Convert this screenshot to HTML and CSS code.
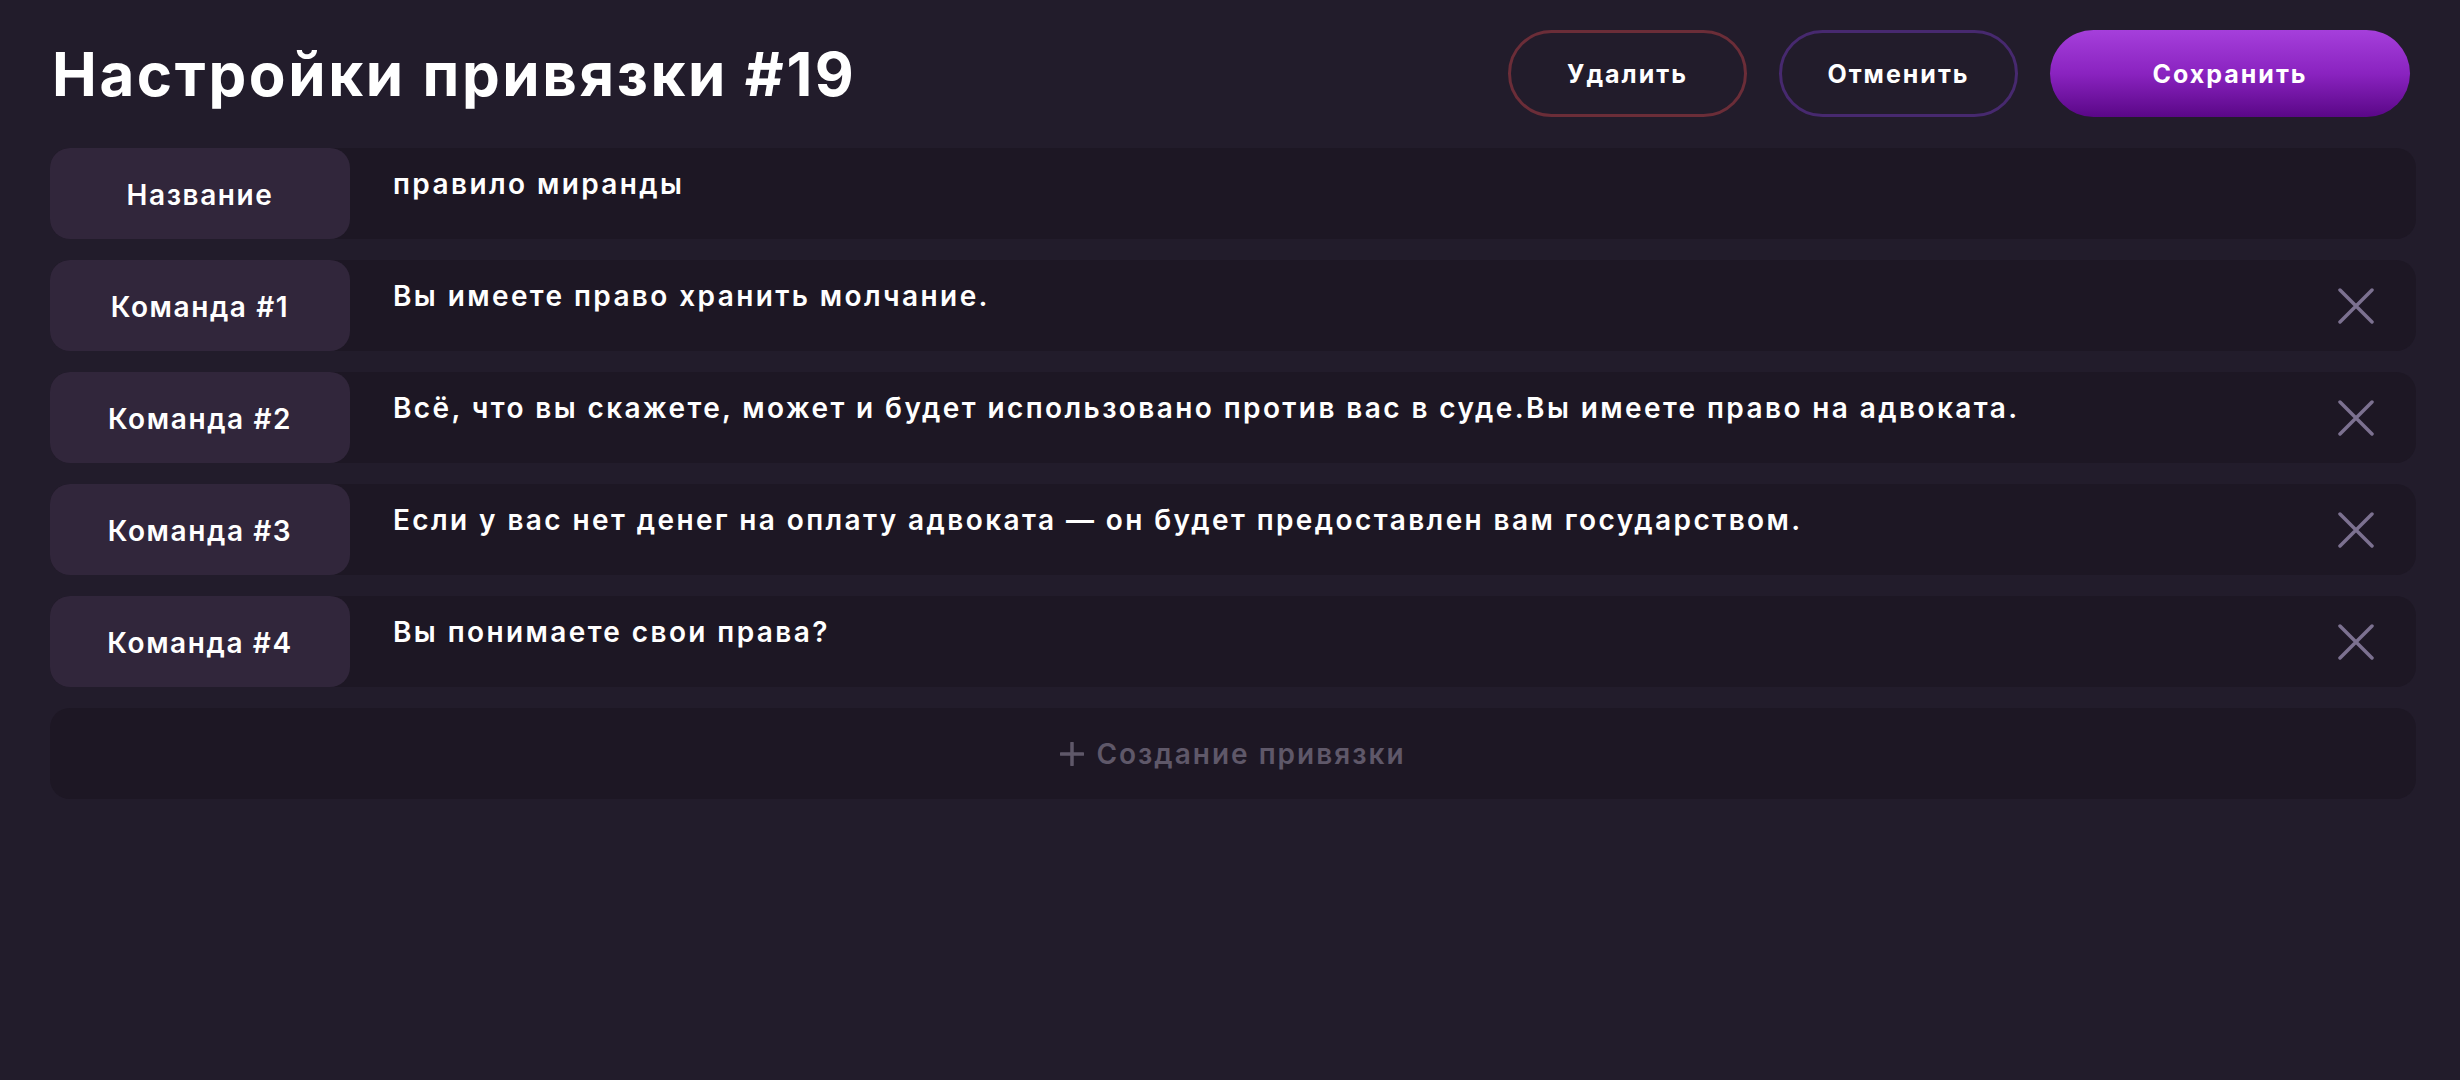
FILE: index.html
```html
<!DOCTYPE html>
<html lang="ru">

<head>
  <meta charset="UTF-8">
  <meta name="viewport" content="width=device-width, initial-scale=1.0">
  <title>Настройки привязки #19</title>
  <link rel="stylesheet" href="styles.css">
</head>

<body>
  <div class="page">
    <div class="header">
      <h1>Настройки привязки #19</h1>
      <div class="actions">
        <button class="btn btn-delete">Удалить</button>
        <button class="btn btn-cancel">Отменить</button>
        <button class="btn btn-save">Сохранить</button>
      </div>
    </div>

    <div class="rows">
      <div class="row">
        <div class="row-label">Название</div>
        <div class="row-value">правило миранды</div>
      </div>

      <div class="row">
        <div class="row-label">Команда #1</div>
        <div class="row-value">Вы имеете право хранить молчание.</div>
        <button class="remove-btn" title="Удалить команду">
          <svg viewBox="0 0 36 36" width="36" height="36">
            <path d="M2 2 L34 34 M34 2 L2 34" />
          </svg>
        </button>
      </div>

      <div class="row">
        <div class="row-label">Команда #2</div>
        <div class="row-value">Всё, что вы скажете, может и будет использовано против вас в суде.Вы имеете право на адвоката.</div>
        <button class="remove-btn" title="Удалить команду">
          <svg viewBox="0 0 36 36" width="36" height="36">
            <path d="M2 2 L34 34 M34 2 L2 34" />
          </svg>
        </button>
      </div>

      <div class="row">
        <div class="row-label">Команда #3</div>
        <div class="row-value">Если у вас нет денег на оплату адвоката — он будет предоставлен вам государством.</div>
        <button class="remove-btn" title="Удалить команду">
          <svg viewBox="0 0 36 36" width="36" height="36">
            <path d="M2 2 L34 34 M34 2 L2 34" />
          </svg>
        </button>
      </div>

      <div class="row">
        <div class="row-label">Команда #4</div>
        <div class="row-value">Вы понимаете свои права?</div>
        <button class="remove-btn" title="Удалить команду">
          <svg viewBox="0 0 36 36" width="36" height="36">
            <path d="M2 2 L34 34 M34 2 L2 34" />
          </svg>
        </button>
      </div>

      <button class="add-row">
        <svg class="plus" viewBox="0 0 24 24" width="24" height="24">
          <path d="M12 1 V23 M1 12 H23" />
        </svg>
        Создание привязки
      </button>
    </div>
  </div>
</body>

</html>
```

FILE: styles.css
```css
* {
  margin: 0;
  padding: 0;
  box-sizing: border-box;
  font-family: "Inter", "Noto Sans", sans-serif;
}

body {
  background-color: #221c2b;
  color: #fff;
  min-height: 100vh;
}

.page {
  padding: 30px 44px 0 50px;
}

/* шапка */
.header {
  display: flex;
  justify-content: space-between;
  align-items: center;
  height: 87px;
  margin-bottom: 31px;
}

.header h1 {
  font-size: 60px;
  font-weight: 700;
  letter-spacing: 2.6px;
  margin-left: 2px;
}

.actions {
  display: flex;
  gap: 32px;
  margin-right: 6px;
}

.btn {
  height: 87px;
  border-radius: 44px;
  font-size: 25px;
  font-weight: 700;
  letter-spacing: 2px;
  color: #fff;
  background: transparent;
  cursor: pointer;
}

.btn-delete {
  width: 239px;
  border: 3px solid #6b2d38;
}

.btn-cancel {
  width: 239px;
  border: 3px solid #47296f;
}

.btn-save {
  width: 360px;
  border: none;
  background: linear-gradient(180deg, #a53fdb 0%, #8a23c0 50%, #5a0787 100%);
}

/* строки */
.rows {
  display: flex;
  flex-direction: column;
  gap: 21px;
}

.row {
  display: flex;
  height: 91px;
  background-color: #1d1724;
  border-radius: 20px;
}

.row-label {
  width: 300px;
  flex-shrink: 0;
  display: flex;
  justify-content: center;
  align-items: center;
  padding-top: 2px;
  background-color: #31263b;
  border-radius: 20px;
  font-size: 28px;
  font-weight: 600;
  letter-spacing: 1.6px;
}

.row-value {
  flex: 1;
  padding: 19px 0 0 43px;
  font-size: 28px;
  font-weight: 600;
  letter-spacing: 2.4px;
}

.remove-btn {
  align-self: center;
  width: 36px;
  height: 36px;
  margin-right: 42px;
  background: none;
  border: none;
  cursor: pointer;
}

.remove-btn svg {
  display: block;
  fill: none;
  stroke: #7c7190;
  stroke-width: 3.5;
  stroke-linecap: round;
}

.add-row {
  display: flex;
  justify-content: center;
  align-items: center;
  gap: 12px;
  height: 91px;
  background-color: #1d1724;
  border: none;
  border-radius: 20px;
  color: #5f5869;
  font-size: 28px;
  font-weight: 600;
  letter-spacing: 2px;
  cursor: pointer;
}

.add-row .plus {
  fill: none;
  stroke: #5f5869;
  stroke-width: 3.5;
  stroke-linecap: round;
}
```
